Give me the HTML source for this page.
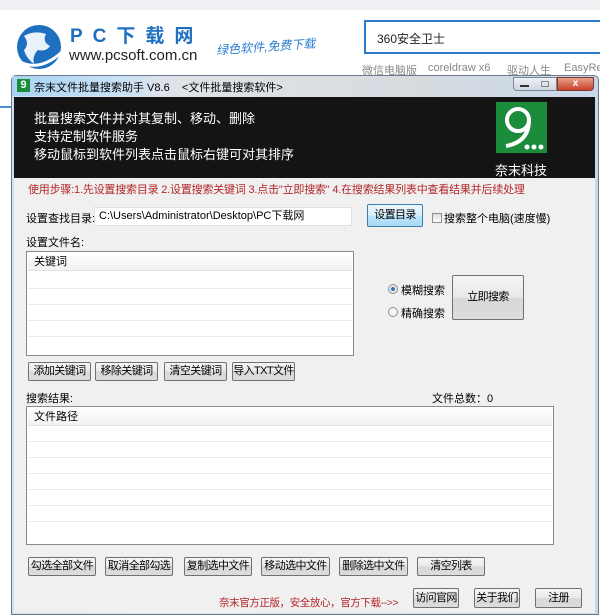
<!DOCTYPE html>
<html><head><meta charset="utf-8"><style>
*{margin:0;padding:0;box-sizing:border-box}
body{width:600px;height:616px;overflow:hidden;background:#fff;position:relative;font-family:"Liberation Sans","Noto Sans CJK SC",sans-serif;font-size:11px;color:#000}
.a{position:absolute;white-space:nowrap}
.btn{position:absolute;border:1px solid #707070;border-radius:2px;background:linear-gradient(#f6f6f6,#e8e8e8 50%,#d8d8d8 51%,#dcdcdc);text-align:center;font-size:11px;color:#000;white-space:nowrap;letter-spacing:-0.6px;overflow:hidden}
.list{position:absolute;background:#fff;border:1px solid #8a8a8a}
.hdr{position:absolute;left:1px;right:1px;top:1px;height:18px;background:linear-gradient(#fff,#f1f2f4);border-bottom:1px solid #e2e3e5;padding-left:6px;line-height:18px;font-size:11px}
.row{position:absolute;left:1px;right:1px;border-top:1px solid #ebebeb}
.red{color:#b3262a}
</style></head><body>
<div class="a" style="left:0;top:0;width:600px;height:10px;background:#eef0f3"></div>
<svg class="a" style="left:16px;top:22px" width="48" height="50" viewBox="0 0 48 50">
<circle cx="23" cy="25" r="22" fill="#1f6fc0"/>
<path d="M8 14 Q18 8 30 12 Q26 20 34 24 Q30 30 22 28 Q16 34 18 42 Q10 36 8 28 Q14 22 8 14Z" fill="#e9f2fb"/>
<path d="M4 40 Q24 50 46 30" stroke="#fff" stroke-width="3" fill="none"/>
</svg>
<div class="a" style="left:70px;top:25px;font-size:19px;line-height:24px;font-weight:bold;color:#1f6fc0;letter-spacing:10px">PC下载网</div>
<div class="a" style="left:69px;top:47px;font-size:15px;line-height:18px;color:#222">www.pcsoft.com.cn</div>
<div class="a" style="left:216px;top:38px;font-size:12px;color:#2a7bd0;font-style:italic;transform:rotate(-4deg)">绿色软件,免费下载</div>
<div class="a" style="left:364px;top:20px;width:240px;height:34px;border:2px solid #2a7bd0;background:#fff"></div>
<div class="a" style="left:377px;top:30px;font-size:12px;color:#222">360安全卫士</div>
<div class="a" style="left:362px;top:62px;font-size:11px;color:#888">微信电脑版</div>
<div class="a" style="left:428px;top:62px;font-size:11px;color:#888">coreldraw x6</div>
<div class="a" style="left:507px;top:62px;font-size:11px;color:#888">驱动人生</div>
<div class="a" style="left:564px;top:62px;font-size:11px;color:#888">EasyRec</div>
<div class="a" style="left:0;top:106px;width:12px;height:2px;background:#4a8fd6"></div>
<div class="a" style="left:11px;top:75px;width:588px;height:540px;border:1px solid #6b7a8a;border-radius:5px 5px 0 0;background:linear-gradient(90deg,#cfe0f0,#dfe3e8 30%,#d6dbe0 70%,#c8d8ea)"></div>
<div class="a" style="left:12px;top:76px;width:150px;height:20px;background:linear-gradient(90deg,#a9d2f2,#c9e2f6 70%,rgba(220,230,240,0))"></div>
<div class="a" style="left:17px;top:79px;width:13px;height:13px;background:#1a8c3a;color:#fff;font-size:11px;line-height:13px;text-align:center;font-weight:bold">9</div>
<div class="a" style="left:34px;top:79px;font-size:11px">奈末文件批量搜索助手 V8.6&nbsp;&nbsp;&nbsp;&nbsp;&lt;文件批量搜索软件&gt;</div>
<div class="a" style="left:513px;top:77px;width:44px;height:14px;border:1px solid #7a8796;border-radius:0 0 0 4px;background:linear-gradient(#eef2f6,#cfd6de)"></div>
<div class="a" style="left:520px;top:85px;width:9px;height:2px;background:#333"></div>
<div class="a" style="left:541px;top:81px;width:8px;height:6px;border:1px solid #888"></div>
<div class="a" style="left:557px;top:77px;width:37px;height:14px;border:1px solid #7a3a30;border-radius:0 0 4px 0;background:linear-gradient(#e9a08c,#c8422a);color:#fff;font-size:10px;font-weight:bold;text-align:center;line-height:12px">x</div>
<div class="a" style="left:14px;top:97px;width:581px;height:81px;background:#141414"></div>
<div class="a" style="left:34px;top:110px;font-size:13px;line-height:18px;color:#fff;white-space:normal">批量搜索文件并对其复制、移动、删除<br>支持定制软件服务<br>移动鼠标到软件列表点击鼠标右键可对其排序</div>
<svg class="a" style="left:496px;top:102px" width="51" height="51" viewBox="0 0 51 51"><rect width="51" height="51" fill="#1a8c3a"/><circle cx="22" cy="18" r="11" stroke="#fff" stroke-width="4" fill="none"/><path d="M33 18 Q33 40 10 44" stroke="#fff" stroke-width="4" fill="none"/><circle cx="31" cy="45" r="2.5" fill="#fff"/><circle cx="38" cy="45" r="2.5" fill="#fff"/><circle cx="45" cy="45" r="2.5" fill="#fff"/></svg>
<div class="a" style="left:495px;top:160px;font-size:13px;color:#fff">奈末科技</div>
<div class="a" style="left:14px;top:178px;width:581px;height:435px;background:#f0f0f0"></div>
<div class="a red" style="left:28px;top:181px;font-size:11px;letter-spacing:-0.2px">使用步骤:1.先设置搜索目录 2.设置搜索关键词 3.点击"立即搜索" 4.在搜索结果列表中查看结果并后续处理</div>
<div class="a" style="left:26px;top:210px">设置查找目录:</div>
<div class="a" style="left:94px;top:207px;width:258px;height:19px;background:#fff;border:1px solid #e0e0e0;padding-left:4px;line-height:17px">C:\Users\Administrator\Desktop\PC下载网</div>
<div class="btn" style="left:367px;top:204px;width:56px;height:23px;line-height:21px;border-color:#3c7fb1;background:linear-gradient(#eaf6fd,#d9f0fc 50%,#bee6fd 51%,#a7d9f5)">设置目录</div>
<div class="a" style="left:432px;top:213px;width:10px;height:10px;border:1px solid #8e8f8f;background:linear-gradient(#ddd,#fff)"></div>
<div class="a" style="left:444px;top:210px">搜索整个电脑(速度慢)</div>
<div class="a" style="left:26px;top:234px">设置文件名:</div>
<div class="list" style="left:26px;top:251px;width:328px;height:105px"><div class="hdr">关键词</div>
<div class="row" style="top:36px"></div><div class="row" style="top:52px"></div><div class="row" style="top:68px"></div><div class="row" style="top:84px"></div></div>
<div class="a" style="left:388px;top:284px;width:10px;height:10px;border-radius:50%;border:1px solid #8e8f8f;background:radial-gradient(#2a70c0 30%,#e8e8e8 40%)"></div>
<div class="a" style="left:401px;top:282px">模糊搜索</div>
<div class="a" style="left:388px;top:307px;width:10px;height:10px;border-radius:50%;border:1px solid #8e8f8f;background:#f4f4f4"></div>
<div class="a" style="left:401px;top:305px">精确搜索</div>
<div class="btn" style="left:452px;top:275px;width:72px;height:45px;line-height:43px">立即搜索</div>
<div class="btn" style="left:28px;top:362px;width:63px;height:19px;line-height:17px">添加关键词</div>
<div class="btn" style="left:95px;top:362px;width:63px;height:19px;line-height:17px">移除关键词</div>
<div class="btn" style="left:164px;top:362px;width:63px;height:19px;line-height:17px">清空关键词</div>
<div class="btn" style="left:232px;top:362px;width:63px;height:19px;line-height:17px">导入TXT文件</div>
<div class="a" style="left:26px;top:390px">搜索结果:</div>
<div class="a" style="left:432px;top:390px">文件总数：0</div>
<div class="list" style="left:26px;top:406px;width:528px;height:139px"><div class="hdr">文件路径</div>
<div class="row" style="top:34px"></div><div class="row" style="top:50px"></div><div class="row" style="top:66px"></div><div class="row" style="top:82px"></div><div class="row" style="top:98px"></div><div class="row" style="top:114px"></div></div>
<div class="btn" style="left:28px;top:557px;width:68px;height:19px;line-height:17px">勾选全部文件</div>
<div class="btn" style="left:105px;top:557px;width:68px;height:19px;line-height:17px">取消全部勾选</div>
<div class="btn" style="left:184px;top:557px;width:68px;height:19px;line-height:17px">复制选中文件</div>
<div class="btn" style="left:261px;top:557px;width:69px;height:19px;line-height:17px">移动选中文件</div>
<div class="btn" style="left:339px;top:557px;width:69px;height:19px;line-height:17px">删除选中文件</div>
<div class="btn" style="left:417px;top:557px;width:68px;height:19px;line-height:17px">清空列表</div>
<div class="a red" style="left:219px;top:595px;font-size:10.5px;letter-spacing:-0.4px">奈末官方正版，安全放心，官方下载--&gt;&gt;</div>
<div class="btn" style="left:413px;top:588px;width:46px;height:20px;line-height:18px">访问官网</div>
<div class="btn" style="left:474px;top:588px;width:46px;height:20px;line-height:18px">关于我们</div>
<div class="btn" style="left:535px;top:588px;width:47px;height:20px;line-height:18px">注册</div>
</body></html>
